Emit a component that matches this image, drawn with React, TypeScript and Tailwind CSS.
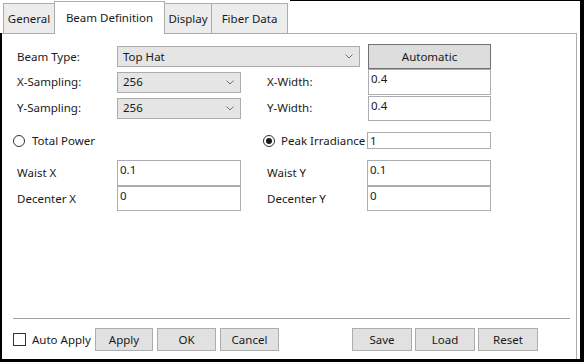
import React from "react";

const font = { fontFamily: '"Noto Sans", "Liberation Sans", sans-serif' };

function Chevron() {
  return (
    <svg width="8" height="5" viewBox="0 0 8 5" className="shrink-0">
      <path d="M0.5 0.5 L4 4 L7.5 0.5" fill="none" stroke="#707070" strokeWidth="1" />
    </svg>
  );
}

function Combo({ value, w }: { value: string; w: string }) {
  return (
    <div className={`${w} h-[21px] bg-[#e5e5e5] border border-[#acacac] flex items-center justify-between pl-[5px] pr-[6px]`}>
      <span>{value}</span>
      <Chevron />
    </div>
  );
}

function TextBox({ value, h, w = "w-[124px]" }: { value: string; h: string; w?: string }) {
  return (
    <div className={`${w} ${h} bg-white border border-[#abadb3] pl-[2px] leading-[15px] pt-[1px]`}>{value}</div>
  );
}

function Btn({ label, w }: { label: string; w: string }) {
  return (
    <div className={`${w} h-[23px] bg-[#e1e1e1] border border-[#adadad] flex items-center justify-center`}>{label}</div>
  );
}

function Radio({ checked }: { checked?: boolean }) {
  return (
    <div className="w-[12px] h-[12px] rounded-full border border-[#333] bg-white flex items-center justify-center shrink-0">
      {checked && <div className="w-[6px] h-[6px] rounded-full bg-[#1a1a1a]" />}
    </div>
  );
}

export default function App() {
  return (
    <div
      className="w-[584px] h-[362px] bg-white border-r-4 border-black flex flex-col text-[11.5px] text-[#1a1a1a] relative overflow-hidden whitespace-nowrap"
      style={font}
    >
      <div className="absolute top-0 left-[290px] right-0 h-px bg-black" />
      {/* Tabs */}
      <div className="h-[33px] flex items-end pl-[3px] shrink-0">
        <div className="w-[52px] h-[30px] bg-[#ececec] border border-b-0 border-[#acacac] flex items-center justify-center pt-[1px]">
          General
        </div>
        <div className="w-[111px] h-[33px] bg-white border border-b-0 border-[#acacac] flex items-center justify-center -ml-px -mb-px relative z-10 pb-[1px]">
          Beam Definition
        </div>
        <div className="w-[48px] h-[30px] bg-[#ececec] border border-b-0 border-[#acacac] flex items-center justify-center -ml-px pt-[1px]">
          Display
        </div>
        <div className="w-[77px] h-[30px] bg-[#ececec] border border-b-0 border-[#acacac] flex items-center justify-center -ml-px pt-[1px]">
          Fiber Data
        </div>
      </div>
      {/* Panel */}
      <div className="flex-1 border-l-2 border-b-[3px] border-black flex pr-[3px]">
        <div className="flex-1 border-t border-r border-[#acacac] flex flex-col">
          <div className="pl-[15px] pt-[10px] flex flex-col">
            {/* Row A */}
            <div className="h-[25px] flex items-center">
              <div className="w-[100px]">Beam Type:</div>
              <Combo value="Top Hat" w="w-[243px]" />
              <div className="w-[8px]" />
              <div className="w-[123px] h-[25px] bg-[#dddddd] border border-[#707070] flex items-center justify-center">
                Automatic
              </div>
            </div>
            {/* Row B */}
            <div className="h-[26px] flex items-center">
              <div className="w-[100px]">X-Sampling:</div>
              <Combo value="256" w="w-[124px]" />
              <div className="w-[26px]" />
              <div className="w-[101px]">X-Width:</div>
              <TextBox value="0.4" h="h-[26px]" w="w-[123px]" />
            </div>
            {/* Row C */}
            <div className="h-[26px] flex items-center">
              <div className="w-[100px]">Y-Sampling:</div>
              <Combo value="256" w="w-[124px]" />
              <div className="w-[26px]" />
              <div className="w-[101px]">Y-Width:</div>
              <div className="self-end">
                <TextBox value="0.4" h="h-[25px]" w="w-[123px]" />
              </div>
            </div>
            {/* Row D */}
            <div className="h-[17px] mt-[11px] flex items-center -ml-[4px]">
              <div className="w-[250px] flex items-center gap-[7px]">
                <Radio />
                <span>Total Power</span>
              </div>
              <div className="w-[104px] flex items-center gap-[6px]">
                <Radio checked />
                <span>Peak Irradiance</span>
              </div>
              <div className="w-[124px] h-[17px] bg-white border border-[#abadb3] pl-[2px] leading-[15px]">1</div>
            </div>
            {/* Row E */}
            <div className="h-[26px] mt-[11px] flex items-center">
              <div className="w-[100px]">Waist X</div>
              <TextBox value="0.1" h="h-[26px]" />
              <div className="w-[26px]" />
              <div className="w-[100px]">Waist Y</div>
              <TextBox value="0.1" h="h-[26px]" />
            </div>
            {/* Row F */}
            <div className="h-[25px] flex items-center">
              <div className="w-[100px]">Decenter X</div>
              <TextBox value="0" h="h-[25px]" />
              <div className="w-[26px]" />
              <div className="w-[100px]">Decenter Y</div>
              <TextBox value="0" h="h-[25px]" />
            </div>
          </div>
          <div className="flex-1" />
          <div className="ml-[11px] mr-[6px] h-px bg-[#a0a0a0]" />
          <div className="h-[23px] mt-[9px] mb-[8px] ml-[11px] flex items-center">
            <div className="w-[13px] h-[13px] border border-[#333] bg-white shrink-0" />
            <span className="ml-[6px] w-[63px]">Auto Apply</span>
            <div className="flex gap-[4px]">
              <Btn label="Apply" w="w-[58px]" />
              <Btn label="OK" w="w-[59px]" />
              <Btn label="Cancel" w="w-[59px]" />
            </div>
            <div className="ml-[73px] flex gap-[3px]">
              <Btn label="Save" w="w-[60px]" />
              <Btn label="Load" w="w-[60px]" />
              <Btn label="Reset" w="w-[60px]" />
            </div>
          </div>
        </div>
      </div>
    </div>
  );
}
